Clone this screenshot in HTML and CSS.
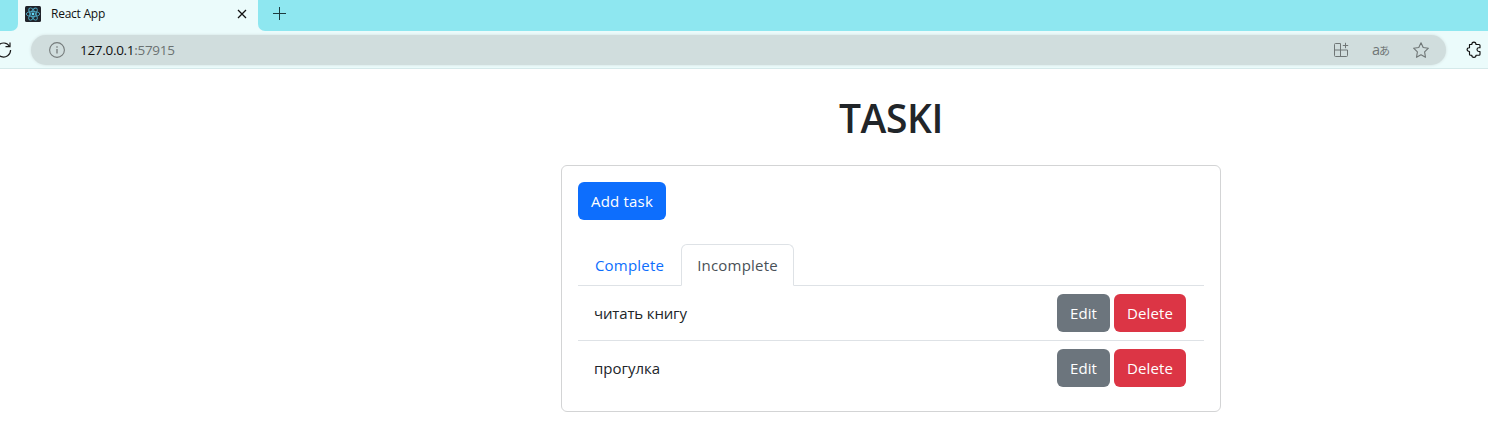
FILE: index.html
```html
<!DOCTYPE html>
<html lang="en">
<head>
<meta charset="utf-8">
<title>React App</title>
<link rel="stylesheet" href="styles.css">
</head>
<body>
<div class="tabstrip">
  <div class="prev-tab"></div>
  <div class="tab">
    <svg class="favicon" width="16" height="16" viewBox="0 0 16 16"><rect width="16" height="16" rx="1.5" fill="#20232a"/><g fill="none" stroke="#4fa9c4" stroke-width=".9"><ellipse cx="8" cy="8" rx="6.8" ry="2.6"/><ellipse cx="8" cy="8" rx="6.8" ry="2.6" transform="rotate(60 8 8)"/><ellipse cx="8" cy="8" rx="6.8" ry="2.6" transform="rotate(120 8 8)"/></g><circle cx="8" cy="8" r="1.4" fill="#61dafb"/></svg>
    <span class="tab-title">React App</span>
    <svg class="close" width="10" height="10" viewBox="0 0 10 10"><path d="M1 1l8 8M9 1l-8 8" stroke="#111" stroke-width="1.3"/></svg>
  </div>
  <div class="rest"><svg width="13" height="13" viewBox="0 0 13 13"><path d="M6.5 0v13M0 6.5h13" stroke="#1d3a3e" stroke-width="1"/></svg></div>
</div>
<div class="toolbar">
  <svg class="reload" width="12" height="18" viewBox="0 0 12 18"><g fill="none" stroke="#1a1a1a" stroke-width="1.2"><path d="M9.6 5.4A7 7 0 1 0 10.6 9"/><path d="M10 1.5v4.2H5.5"/></g></svg>
  <div class="address">
    <svg class="info" width="16" height="16" viewBox="0 0 16 16"><circle cx="8" cy="8" r="7.4" fill="none" stroke="#757b7b" stroke-width="1.1"/><path d="M8 7v4.5M8 4.2v1.5" stroke="#757b7b" stroke-width="1.3"/></svg>
    <span class="url">127.0.0.1<span class="port">:57915</span></span>
    <svg class="apps" width="16" height="16" viewBox="0 0 16 16"><path d="M7.5 1.5h-5a1 1 0 0 0-1 1v11a1 1 0 0 0 1 1h11a1 1 0 0 0 1-1V8H1.5M7.5 1.5v13M12.5 .8v5.4M9.8 3.5h5.4" fill="none" stroke="#6f7676" stroke-width="1"/></svg>
    <span class="translate">a<span class="kana">あ</span></span>
    <svg class="star" width="18" height="18" viewBox="0 0 18 18"><path d="M9 1.7l2.2 4.8 5.2.7-3.8 3.6.9 5.5L9 13.7l-4.5 2.6.9-5.5L1.6 7.2l5.2-.7z" fill="none" stroke="#6f7676" stroke-width="1.1" stroke-linejoin="round"/></svg>
  </div>
  <svg class="puzzle" width="16" height="17" viewBox="0 0 16 17"><path d="M3.5 3.5h2.3C5.8.3 10 .3 10 3.5h3a1 1 0 0 1 1 1v2.2h-1.2c-2.4 0-2.4 3.8 0 3.8H14v2.7a1 1 0 0 1-1 1h-3c0 2.8-4.2 2.8-4.2 0H4.5a1 1 0 0 1-1-1v-2.7C.3 10.5.3 6.7 3.5 6.7z" fill="none" stroke="#111" stroke-width="1.15" stroke-linejoin="round"/></svg>
</div>
<main class="page">
  <h1 class="title">TASKI</h1>
  <section class="card">
    <button class="btn primary">Add task</button>
    <nav class="nav-tabs"><a class="nav-link complete">Complete</a><a class="nav-link active">Incomplete</a></nav>
    <ul class="tasks">
      <li class="task"><span class="task-name name-book">читать книгу</span><span class="actions"><button class="btn edit">Edit</button><button class="btn delete">Delete</button></span></li>
      <li class="task"><span class="task-name">прогулка</span><span class="actions"><button class="btn edit">Edit</button><button class="btn delete">Delete</button></span></li>
    </ul>
  </section>
</main>
</body>
</html>
```
FILE: styles.css
```css
* { box-sizing: border-box; }
body { margin: 0; height: 428px; overflow: hidden; background: #fff; color: #212529; font-family: "Open Sans", "Noto Sans", sans-serif; font-size: 15px; line-height: 24px; }
svg { display: block; flex: none; }
.tabstrip { display: flex; height: 31px; background: #ebfbfb; }
.prev-tab { width: 18px; background: #8ee7f0; border-bottom-right-radius: 7px; }
.tab { display: flex; align-items: center; width: 240px; padding: 0 11px 3px 7px; background: #ebfbfb; }
.tab-title { flex: 1; margin-left: 10px; font-size: 12px; line-height: 16px; letter-spacing: -.25px; color: #111; }
.rest { flex: 1; padding: 7px 0 0 15px; background: #8ee7f0; border-bottom-left-radius: 7px; }
.toolbar { display: flex; align-items: center; height: 38px; background: #ebfbfb; border-bottom: 1px solid #d5e9ea; }
.address { display: flex; align-items: center; width: 1415px; height: 30px; margin-left: 19px; padding: 0 16px 0 18px; border-radius: 15px; background: #d0dddd; box-shadow: 0 0 3px #d0dddd; }
.url { flex: 1; margin-left: 15px; font-size: 13.5px; letter-spacing: -.3px; color: #111; }
.port { color: #6b7272; }
.translate { margin: 0 22px 0 23px; display: flex; align-items: center; font-size: 14.5px; line-height: 18px; color: #6f7676; }
.kana { margin-left: -1px; font-family: "Noto Sans CJK JP", sans-serif; font-size: 11px; }
.puzzle { margin-left: 20px; }
.page { display: flex; flex-direction: column; align-items: center; width: 660px; margin-left: 561px; padding-top: 25px; }
.title { margin: 0 0 23px; font-size: 39px; line-height: 48px; font-weight: 600; letter-spacing: -.4px; }
.card { width: 660px; height: 247px; padding: 16px; border: 1px solid #d3d4d5; border-radius: 6px; }
.btn { display: block; height: 38px; padding: 0; border: 0; border-radius: 6px; color: #fff; font: 15px/38px "Open Sans", sans-serif; letter-spacing: .1px; }
.primary { width: 88px; background: #0d6efd; letter-spacing: .2px; }
.nav-tabs { display: flex; height: 42px; margin-top: 24px; border-bottom: 1px solid #dee2e6; }
.nav-link { height: 42px; padding: 8px 0; text-align: center; border: 1px solid transparent; letter-spacing: .2px; }
.complete { width: 103px; color: #0d6efd; }
.active { width: 113px; color: #495057; background: #fff; border-color: #dee2e6 #dee2e6 #fff; border-radius: 6px 6px 0 0; }
.tasks { list-style: none; margin: 0; padding: 0; }
.task { display: flex; align-items: center; justify-content: space-between; height: 54px; padding: 0 18px 0 16px; }
.task + .task { height: 55px; border-top: 1px solid #dee2e6; }
.name-book { letter-spacing: -.15px; }
.actions { display: flex; gap: 4px; }
.edit { width: 53px; background: #6c757d; }
.delete { width: 72px; background: #dc3545; }
```
